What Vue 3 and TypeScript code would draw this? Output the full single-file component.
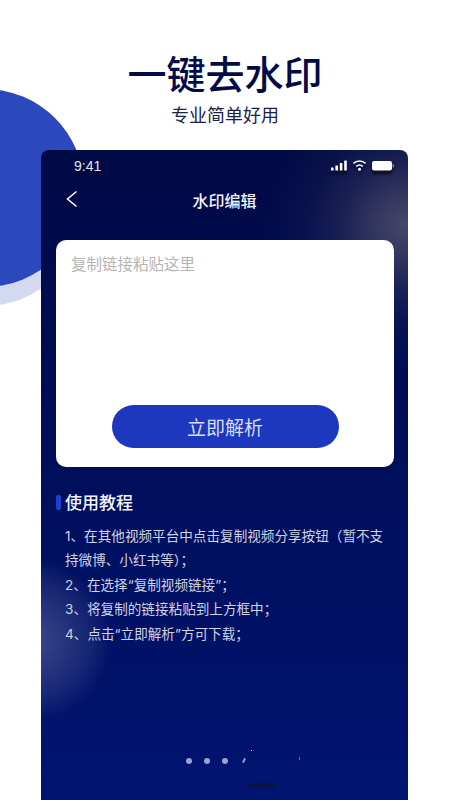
<script setup lang="ts">
const steps: string[] = [
  '1、在其他视频平台中点击复制视频分享按钮（暂不支持微博、小红书等）；',
  '2、在选择“复制视频链接”；',
  '3、将复制的链接粘贴到上方框中；',
  '4、点击“立即解析”方可下载；',
]
const dots = [0, 1, 2, 3]
</script>

<template>
  <div class="page">
    <div class="circle back"></div>
    <div class="circle front"></div>
    <header class="head">
      <h1 class="title">一键去水印</h1>
      <p class="sub">专业简单好用</p>
    </header>
    <section class="phone">
      <div class="glow glow-top"></div>
      <div class="glow glow-left"></div>
      <div class="status">
        <span class="time">9:41</span>
        <svg class="sys" width="64" height="14" viewBox="0 0 64 14">
          <g fill="#fff">
            <rect x="0" y="8.5" width="2.6" height="3" rx=".6" />
            <rect x="4.4" y="6.5" width="2.6" height="5" rx=".6" />
            <rect x="8.8" y="4" width="2.6" height="7.5" rx=".6" />
            <rect x="13.2" y="1.5" width="2.6" height="10" rx=".6" />
            <circle cx="28.5" cy="10.2" r="1.5" />
            <rect x="41" y="2" width="20" height="9.5" rx="2.2" />
          </g>
          <rect x="61.6" y="5" width="1.2" height="3.5" rx=".6" fill="#8c90a8" />
          <g fill="none" stroke="#fff" stroke-width="1.5">
            <path d="M25.2 7.4a5 5 0 0 1 6.6 0" />
            <path d="M22.4 4.4a9 9 0 0 1 12.2 0" />
          </g>
        </svg>
      </div>
      <div class="nav">
        <svg class="back-icon" width="14" height="18" viewBox="0 0 14 18">
          <path d="M12.5 1.5 3.5 9l9 7.5" fill="none" stroke="#fff" stroke-width="1.5" />
        </svg>
        <span class="nav-title">水印编辑</span>
      </div>
      <div class="card">
        <p class="placeholder">复制链接粘贴这里</p>
        <button class="action" type="button">立即解析</button>
      </div>
      <div class="guide">
        <h2 class="guide-title">使用教程</h2>
        <p v-for="step in steps" :key="step" class="step">{{ step }}</p>
      </div>
      <div class="dots">
        <i v-for="d in dots" :key="d" class="dot"></i>
      </div>
      <i class="speck speck-a"></i>
      <i class="speck speck-b"></i>
      <div class="home"></div>
    </section>
  </div>
</template>

<style>
html, body { margin: 0; background: #fff; }
</style>

<style scoped>
.page {
  position: relative;
  width: 450px;
  height: 800px;
  overflow: hidden;
  background: #fff;
  font-family: "Noto Sans CJK SC", "Liberation Sans", sans-serif;
}
.circle { position: absolute; border-radius: 50%; width: 198px; height: 198px; left: -114px; }
.back { top: 108px; background: #d3d9f0; }
.front { top: 89px; background: #2c48bd; }
.head {
  position: relative;
  display: flex;
  flex-direction: column;
  align-items: center;
  padding-top: 49px;
  height: 101px;
  color: #020b45;
}
.title { margin: 0; font-size: 39px; line-height: 46px; font-weight: 500; }
.sub { margin: 7px 0 0; font-size: 18px; line-height: 24px; font-weight: 400; color: #1a2248; }
.phone {
  position: relative;
  width: 367px;
  height: 650px;
  margin-left: 41px;
  box-sizing: border-box;
  overflow: hidden;
  border-radius: 8px 8px 0 0;
  background: linear-gradient(180deg, #000a45 0%, #000c50 25%, #001062 65%, #011470 100%);
}
.glow { position: absolute; border-radius: 50%; }
.glow-top {
  left: 224px;
  top: -65px;
  width: 280px;
  height: 280px;
  background: radial-gradient(circle closest-side, rgba(255, 225, 180, .28) 0%, rgba(255, 225, 180, .2) 22%, rgba(255, 225, 180, .1) 45%, rgba(255, 225, 180, .035) 70%, rgba(255, 225, 180, 0) 100%);
}
.glow-left {
  left: -90px;
  top: 410px;
  width: 160px;
  height: 160px;
  background: radial-gradient(circle, rgba(190, 190, 220, .32) 0%, rgba(190, 190, 220, .12) 50%, rgba(190, 190, 220, 0) 72%);
}
.status {
  position: relative;
  display: flex;
  justify-content: space-between;
  align-items: center;
  height: 31px;
  padding: 0 13px 0 33px;
}
.time {
  font-family: "Liberation Sans", sans-serif;
  font-size: 14px;
  color: #e8e8ef;
  text-shadow: 0 4px 2px rgba(0, 0, 0, .35);
}
.sys { flex: none; filter: drop-shadow(0 4px 1px rgba(0, 0, 0, .55)); }
.nav {
  position: relative;
  display: flex;
  justify-content: center;
  align-items: center;
  height: 38px;
}
.back-icon { position: absolute; left: 23px; top: 9px; }
.nav-title { font-size: 16px; font-weight: 500; color: #f2f2f6; }
.card {
  position: relative;
  display: flex;
  flex-direction: column;
  align-items: center;
  box-sizing: border-box;
  width: 338px;
  height: 227px;
  margin: 21px 0 0 15px;
  padding: 11px 0 19px;
  border-radius: 10px;
  background: #fff;
}
.placeholder {
  align-self: flex-start;
  margin: 0 0 0 15px;
  font-size: 15.5px;
  line-height: 24px;
  color: #b4b4b4;
}
.action {
  width: 227px;
  height: 43px;
  margin-top: auto;
  padding: 0;
  border: 0;
  border-radius: 22px;
  background: #1d37be;
  color: #d9def5;
  font-family: inherit;
  font-size: 19px;
  font-weight: 400;
}
.guide { position: relative; padding: 22px 16px 0 24px; }
.guide-title {
  position: relative;
  margin: 0 0 8.5px;
  font-size: 17px;
  line-height: 26px;
  font-weight: 500;
  color: #f2f3f8;
}
.guide-title::before {
  content: "";
  position: absolute;
  left: -9px;
  top: 6px;
  width: 5px;
  height: 15px;
  border-radius: 2px;
  background: #1f3fd0;
}
.step {
  margin: 0;
  font-family: Inter, "Noto Sans CJK SC", sans-serif;
  font-size: 13.6px;
  line-height: 24.5px;
  color: #d0d3e2;
}
.dots {
  position: absolute;
  left: 145px;
  top: 608px;
  display: flex;
  gap: 12px;
}
.dot { width: 6px; height: 6px; border-radius: 50%; background: #9aa3d2; }
.dot:last-child { width: 2px; height: 5px; border-radius: 1px; transform: rotate(25deg); margin-left: 3px; }
.speck { position: absolute; width: 1px; height: 1px; background: #dfe3f5; }
.speck-a { left: 210px; top: 600px; }
.speck-b { left: 258px; top: 607px; height: 3px; background: #5f69a8; }
.home {
  position: absolute;
  left: 209px;
  top: 633px;
  width: 25px;
  height: 4px;
  background: #0b1140;
  filter: blur(.6px);
}
</style>
